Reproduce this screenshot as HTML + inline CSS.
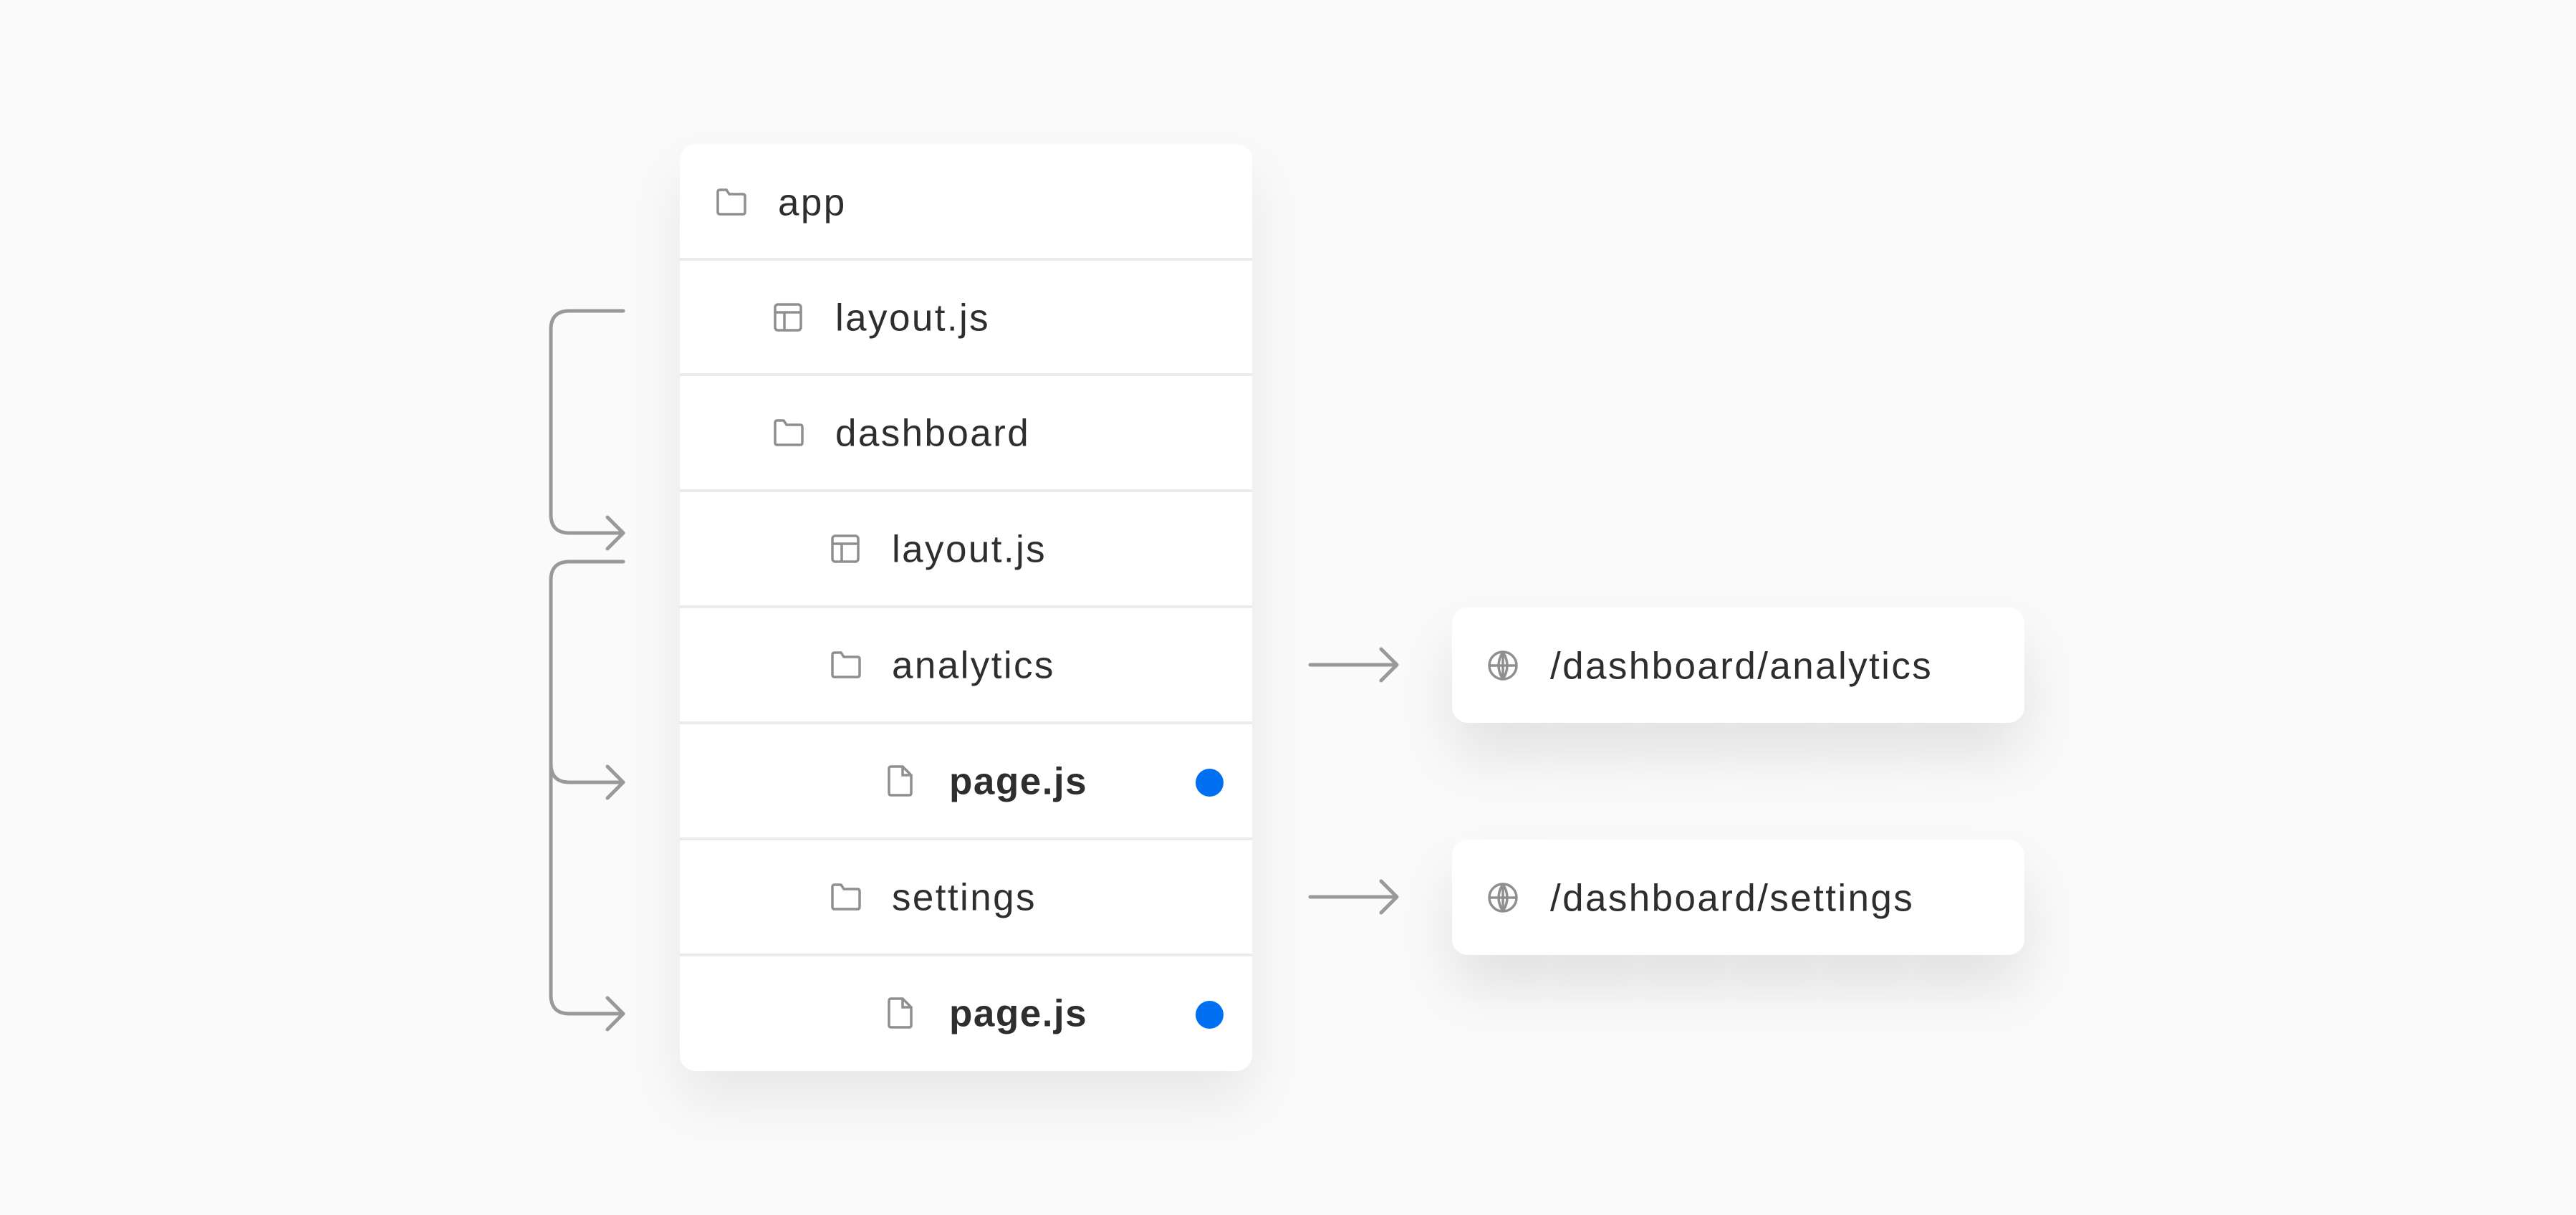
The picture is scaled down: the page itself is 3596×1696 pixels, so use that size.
<!DOCTYPE html>
<html><head><meta charset="utf-8"><style>
*{margin:0;padding:0;box-sizing:border-box}
body{width:3596px;height:1696px;background:#fafafa;position:relative;overflow:hidden;font-family:"Liberation Sans",sans-serif;color:#2e2e2e}
.panel{position:absolute;left:949px;top:201px;width:799px;height:1294px;background:#fff;border-radius:22px;box-shadow:0 40px 80px rgba(0,0,0,0.08);overflow:hidden}
.row{position:absolute;left:0;width:100%;height:162px;border-top:4px solid #ebebeb}
.row:first-child{border-top:none}
.ic{position:absolute;top:50%;transform:translateY(-50%)}
.t{position:absolute;top:50%;transform:translateY(-48%);font-size:53px;letter-spacing:2.4px;white-space:nowrap}
.b{font-weight:bold;letter-spacing:1.5px}
.dot{position:absolute;right:40px;top:50%;width:39px;height:39px;margin-top:-17px;border-radius:50%;background:#0070f3}
.url{position:absolute;left:2027px;width:799px;height:161px;background:#fff;border-radius:22px;box-shadow:0 45px 80px rgba(0,0,0,0.1)}
svg.l{position:absolute;left:0;top:0}
</style></head><body>
<svg class="l" width="3596" height="1696" fill="none" stroke="#999" stroke-width="5" stroke-linecap="round" stroke-linejoin="round">
<path d="M870 434 H795 Q769 434 769 460 V718 Q769 744 795 744 H868"/>
<path d="M848 722 L870 744 L848 766"/>
<path d="M870 784 H795 Q769 784 769 810 V1389 Q769 1415 795 1415 H868"/>
<path d="M769 1066 Q769 1092 795 1092 H868"/>
<path d="M848 1070 L870 1092 L848 1114"/>
<path d="M848 1393 L870 1415 L848 1437"/>
<path d="M1829 928 H1948 M1928 906 L1950 928 L1928 950"/>
<path d="M1829 1252 H1948 M1928 1230 L1950 1252 L1928 1274"/>
</svg>
<div class="panel">
<div class="row" style="top:0"><svg class="ic" style="left:50px" width="44" height="40" viewBox="0 0 44 40" fill="none" stroke="#8f8f8f" stroke-width="3.5"><path d="M3 6 Q3 3 6 3 H15 L19 9 H38 Q41 9 41 12 V34 Q41 37 38 37 H6 Q3 37 3 34 Z"/></svg><div class="t" style="left:137px">app</div></div>
<div class="row" style="top:159px"><svg class="ic" style="left:130px" width="42" height="42" viewBox="0 0 42 42" fill="none" stroke="#8f8f8f" stroke-width="3.5"><rect x="3" y="3" width="36" height="36" rx="4"/><path d="M3 14 H39 M16 14 V39"/></svg><div class="t" style="left:217px">layout.js</div></div>
<div class="row" style="top:320px"><svg class="ic" style="left:130px" width="44" height="40" viewBox="0 0 44 40" fill="none" stroke="#8f8f8f" stroke-width="3.5"><path d="M3 6 Q3 3 6 3 H15 L19 9 H38 Q41 9 41 12 V34 Q41 37 38 37 H6 Q3 37 3 34 Z"/></svg><div class="t" style="left:217px">dashboard</div></div>
<div class="row" style="top:482px"><svg class="ic" style="left:210px" width="42" height="42" viewBox="0 0 42 42" fill="none" stroke="#8f8f8f" stroke-width="3.5"><rect x="3" y="3" width="36" height="36" rx="4"/><path d="M3 14 H39 M16 14 V39"/></svg><div class="t" style="left:296px">layout.js</div></div>
<div class="row" style="top:644px"><svg class="ic" style="left:210px" width="44" height="40" viewBox="0 0 44 40" fill="none" stroke="#8f8f8f" stroke-width="3.5"><path d="M3 6 Q3 3 6 3 H15 L19 9 H38 Q41 9 41 12 V34 Q41 37 38 37 H6 Q3 37 3 34 Z"/></svg><div class="t" style="left:296px">analytics</div></div>
<div class="row" style="top:806px"><svg class="ic" style="left:290px" width="36" height="44" viewBox="0 0 36 44" fill="none" stroke="#8f8f8f" stroke-width="3.5"><path d="M5 2 H21 L33 14 V39 Q33 42 30 42 H5 Q2 42 2 39 V5 Q2 2 5 2 Z M21 2 V14 H33"/></svg><div class="t b" style="left:376px">page.js</div><div class="dot"></div></div>
<div class="row" style="top:968px"><svg class="ic" style="left:210px" width="44" height="40" viewBox="0 0 44 40" fill="none" stroke="#8f8f8f" stroke-width="3.5"><path d="M3 6 Q3 3 6 3 H15 L19 9 H38 Q41 9 41 12 V34 Q41 37 38 37 H6 Q3 37 3 34 Z"/></svg><div class="t" style="left:296px">settings</div></div>
<div class="row" style="top:1130px"><svg class="ic" style="left:290px" width="36" height="44" viewBox="0 0 36 44" fill="none" stroke="#8f8f8f" stroke-width="3.5"><path d="M5 2 H21 L33 14 V39 Q33 42 30 42 H5 Q2 42 2 39 V5 Q2 2 5 2 Z M21 2 V14 H33"/></svg><div class="t b" style="left:376px">page.js</div><div class="dot"></div></div>
</div>
<div class="url" style="top:848px"><svg class="ic" style="left:49px" width="44" height="44" viewBox="0 0 44 44" fill="none" stroke="#8f8f8f" stroke-width="3.5"><circle cx="22" cy="22" r="19"/><path d="M3 22 H41 M22 3 V41 M22 3 Q10 22 22 41 M22 3 Q34 22 22 41"/></svg><div class="t" style="left:137px">/dashboard/analytics</div></div>
<div class="url" style="top:1172px"><svg class="ic" style="left:49px" width="44" height="44" viewBox="0 0 44 44" fill="none" stroke="#8f8f8f" stroke-width="3.5"><circle cx="22" cy="22" r="19"/><path d="M3 22 H41 M22 3 V41 M22 3 Q10 22 22 41 M22 3 Q34 22 22 41"/></svg><div class="t" style="left:137px">/dashboard/settings</div></div>
</body></html>
